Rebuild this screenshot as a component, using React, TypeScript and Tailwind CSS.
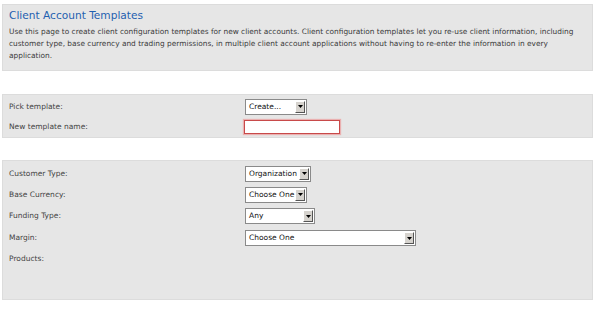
import React from "react";

const font = { fontFamily: '"DejaVu Sans", Verdana, sans-serif' };

function Select({ value, width }: { value: string; width: string }) {
  return (
    <div
      className={`flex h-[16px] items-center justify-between overflow-hidden border border-[#8a8a8a] bg-white pl-[3px] pr-[1px] ${width}`}
    >
      <span className="whitespace-nowrap text-[7.5px] leading-none text-[#111]">{value}</span>
      <span className="flex h-[12px] w-[10px] shrink-0 items-center justify-center border border-b-[#555] border-r-[#555] border-l-[#fff] border-t-[#fff] bg-[#d6d3ce]">
        <svg width="5" height="3" viewBox="0 0 5 3">
          <path d="M0 0 H5 L2.5 3 Z" fill="#000" />
        </svg>
      </span>
    </div>
  );
}

function Row({ label, children, h }: { label: string; children?: React.ReactNode; h: string }) {
  return (
    <div className={`grid grid-cols-[236px_1fr] items-center ${h}`}>
      <span className="text-[7.5px] text-[#444]">{label}</span>
      <div>{children}</div>
    </div>
  );
}

export default function App() {
  return (
    <div className="h-[319px] w-[600px] bg-white pt-[4px]" style={font}>
      <div className="mx-[2px] h-[67px] w-[591px] border border-[#dcdcdc] bg-[#e6e6e6] px-[6px] pt-[3px]">
        <h1 className="text-[10.6px] leading-[14px] text-[#1f5fb0]">Client Account Templates</h1>
        <p className="mt-[4px] text-[7.4px] leading-[12px] text-[#3a3a3a]">
          Use this page to create client configuration templates for new client accounts. Client configuration templates let you re-use client information, including customer type, base currency and trading permissions, in multiple client account applications without having to re-enter the information in every application.
        </p>
      </div>

      <div className="mx-[2px] mt-[23px] h-[44px] w-[591px] border border-[#dcdcdc] bg-[#e6e6e6] px-[6px] pt-[2px]">
        <Row label="Pick template:" h="h-[19px]">
          <Select value="Create..." width="w-[62px]" />
        </Row>
        <Row label="New template name:" h="h-[21px]">
          <div className="h-[14px] w-[96px] -translate-x-[1px] border-[1.5px] border-[#c84a4a] bg-white shadow-[0_0_1px_1px_#eab0b0]" />
        </Row>
      </div>

      <div className="mx-[2px] mt-[22px] h-[140px] w-[591px] border border-[#dcdcdc] bg-[#e6e6e6] px-[6px] pt-[2px]">
        <Row label="Customer Type:" h="h-[21px]">
          <Select value="Organization" width="w-[66px]" />
        </Row>
        <Row label="Base Currency:" h="h-[21px]">
          <Select value="Choose One" width="w-[62px]" />
        </Row>
        <Row label="Funding Type:" h="h-[22px]">
          <Select value="Any" width="w-[70px]" />
        </Row>
        <Row label="Margin:" h="h-[22px]">
          <Select value="Choose One" width="w-[171px]" />
        </Row>
        <Row label="Products:" h="h-[20px]" />
      </div>
    </div>
  );
}
